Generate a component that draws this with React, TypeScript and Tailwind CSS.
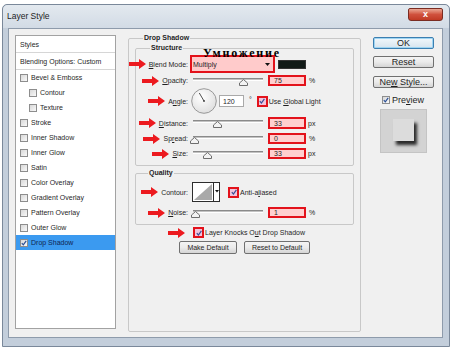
import React from 'react';

// red annotation arrow pointing at a label
function Arrow() {
  return (
    <svg width="17" height="10" viewBox="0 0 17 10" className="shrink-0">
      <polygon points="0,3 10,3 10,0 17,5 10,10 10,7 0,7" fill="#ec1a1f" />
    </svg>
  );
}

function ListBox({ checked }: { checked?: boolean }) {
  return (
    <span className="flex h-[8px] w-[8px] shrink-0 items-center justify-center border border-[#8d8d8d] bg-gradient-to-br from-[#d8d8d8] to-[#f9f9f9]">
      {checked && (
        <svg width="6" height="6" viewBox="0 0 6 6">
          <path d="M0.8 3.2 L2.3 4.8 L5.2 0.9" fill="none" stroke="#2a4f96" strokeWidth="1.2" />
        </svg>
      )}
    </span>
  );
}

function RedCheck() {
  return (
    <span className="flex h-[11px] w-[11px] shrink-0 items-center justify-center border-2 border-[#e3121b] bg-[#f0c4dc]">
      <svg width="6" height="6" viewBox="0 0 6 6">
        <path d="M0.8 3.2 L2.4 5 L5.4 0.8" fill="none" stroke="#3c4f98" strokeWidth="1.2" />
      </svg>
    </span>
  );
}

function RedInput({ value }: { value: string }) {
  return (
    <div className="ml-[5px] flex h-full w-[38px] shrink-0 items-center border-2 border-[#e3121b] bg-[#ffd0d0] pl-[4px]">
      {value}
    </div>
  );
}

function Slider({ pos }: { pos: number }) {
  return (
    <div className="relative ml-[5px] flex h-full w-[70px] shrink-0 flex-col">
      <div className="mt-[3px] h-[3px] border-t border-b border-t-[#8a8a8a] border-b-white bg-[#c2c2c2]" />
      <svg width="9" height="7" viewBox="0 0 9 7" className="absolute top-[4px]" style={{ left: pos - 4 }}>
        <polygon points="4.5,0.5 8.5,4 8.5,6.5 0.5,6.5 0.5,4" fill="#f3f3f3" stroke="#6e6e6e" />
      </svg>
    </div>
  );
}

function Label({ children }: { children: React.ReactNode }) {
  return (
    <div className="flex w-[52px] shrink-0 items-center justify-end gap-[3px]">
      <Arrow />
      <span className="whitespace-nowrap">{children}</span>
    </div>
  );
}

function Btn({ children, className }: { children: React.ReactNode; className: string }) {
  return (
    <div
      className={`flex items-center justify-center rounded-[2px] border border-[#707070] bg-gradient-to-b from-[#f4f4f4] via-[#ebebeb] to-[#d5d5d5] ${className}`}
    >
      {children}
    </div>
  );
}

const styles = [
  { name: 'Bevel & Emboss', sub: false },
  { name: 'Contour', sub: true },
  { name: 'Texture', sub: true },
  { name: 'Stroke', sub: false },
  { name: 'Inner Shadow', sub: false },
  { name: 'Inner Glow', sub: false },
  { name: 'Satin', sub: false },
  { name: 'Color Overlay', sub: false },
  { name: 'Gradient Overlay', sub: false },
  { name: 'Pattern Overlay', sub: false },
  { name: 'Outer Glow', sub: false },
];

export default function App() {
  return (
    <div className="h-[347px] w-[450px] overflow-hidden bg-white pl-[2px] pt-[4px] font-['Liberation_Sans',Arial,sans-serif] text-[7px] leading-none text-[#1f1f1f]">
      <div className="flex h-[343px] w-[448px] flex-col rounded-t-[5px] border border-[#7a889a] bg-[#c3cedb]">
        {/* Title bar */}
        <div className="flex h-[23px] shrink-0 items-start rounded-t-[5px] bg-gradient-to-b from-[#e3e9ef] to-[#d2dbe5]">
          <span className="ml-[4px] mt-[7px] text-[8.5px] text-[#222]">Layer Style</span>
          <div className="ml-auto mr-[6px] mt-[3px] flex h-[13px] w-[35px] items-center justify-center rounded-b-[3px] rounded-t-[2px] border border-[#7a2c22] bg-gradient-to-b from-[#e9a593] via-[#d0513d] to-[#c03a24]">
            <span className="text-[9px] font-bold text-white">x</span>
          </div>
        </div>

        {/* Client area */}
        <div className="ml-[5px] mr-[6px] flex h-[310px] shrink-0 border border-[#8e9bab] bg-[#f0f0f0] pl-[6px]">
          {/* Styles list */}
          <div className="mt-[6px] flex h-[294px] w-[101px] shrink-0 flex-col border border-[#a2a2a2] bg-white">
            <div className="flex h-[17px] shrink-0 items-center border-b border-[#d6d6d6] pl-[4px]">Styles</div>
            <div className="flex h-[17px] shrink-0 items-center border-b border-[#d6d6d6] pl-[4px]">Blending Options: Custom</div>
            {styles.map((s) => (
              <div
                key={s.name}
                className={`flex h-[15px] shrink-0 items-center gap-[3px] ${s.sub ? 'pl-[13px]' : 'pl-[4px]'}`}
              >
                <ListBox />
                <span>{s.name}</span>
              </div>
            ))}
            <div className="flex h-[15px] shrink-0 items-center gap-[3px] bg-[#3b9af0] pl-[4px] text-[#0f2550]">
              <ListBox checked />
              <span>Drop Shadow</span>
            </div>
          </div>

          {/* Drop Shadow panel */}
          <fieldset className="relative ml-[12px] mt-[4px] h-[299px] w-[233px] shrink-0 rounded-[2px] border border-[#c8c8c8]">
            <legend className="ml-[14px] px-[1px] text-[7px] font-bold leading-[10px]">Drop Shadow</legend>

            <span className="absolute left-[74px] top-[4px] z-10 font-['Liberation_Serif',serif] text-[12px] font-bold leading-[12px] tracking-[1.8px] text-black">
              Умножение
            </span>

            {/* Structure */}
            <fieldset className="ml-[6px] h-[123px] w-[219px] rounded-[2px] border border-[#c8c8c8]">
              <legend className="ml-[14px] px-[1px] font-bold leading-[10px]">Structure</legend>

              <div className="mt-[2px] flex h-[18px] items-center">
                <Label>
                  <span className="underline">B</span>lend Mode:
                </Label>
                <div className="ml-[2px] flex h-full w-[85px] shrink-0 items-center border-2 border-[#e3121b] bg-[#ffcbcb] pl-[1px]">
                  <span>Multiply</span>
                  <svg width="5" height="3" viewBox="0 0 5 3" className="ml-auto mr-[3px]">
                    <polygon points="0,0 5,0 2.5,3" fill="#111" />
                  </svg>
                </div>
                <div className="ml-[3px] h-[9px] w-[28px] shrink-0 border border-[#333] bg-[#111a17]" />
              </div>

              <div className="mt-[2px] flex h-[11px] items-center">
                <Label>
                  <span className="underline">O</span>pacity:
                </Label>
                <Slider pos={50} />
                <RedInput value="75" />
                <span className="ml-[3px]">%</span>
              </div>

              <div className="mt-[3px] flex h-[24px] items-center">
                <Label>
                  A<span className="underline">n</span>gle:
                </Label>
                <svg width="26" height="26" viewBox="0 0 26 26" className="ml-[3px] shrink-0">
                  <defs>
                    <radialGradient id="dial" cx="40%" cy="35%" r="70%">
                      <stop offset="0" stopColor="#ffffff" />
                      <stop offset="1" stopColor="#dedede" />
                    </radialGradient>
                  </defs>
                  <circle cx="13" cy="13" r="12.3" fill="url(#dial)" stroke="#8e8e8e" strokeWidth="0.9" />
                  <line x1="13" y1="13" x2="8.3" y2="5" stroke="#3a3a3a" strokeWidth="0.9" />
                  <circle cx="13" cy="13" r="0.9" fill="#3a3a3a" />
                </svg>
                <div className="ml-[2px] flex h-[12px] w-[25px] shrink-0 items-center border border-[#a9a9a9] bg-white pl-[3px]">120</div>
                <span className="ml-[5px] mb-[3px]">°</span>
                <div className="ml-[5px]">
                  <RedCheck />
                </div>
                <span className="ml-[1px] whitespace-nowrap">
                  Use <span className="underline">G</span>lobal Light
                </span>
              </div>

              <div className="mt-[4px] flex h-[12px] items-center">
                <Label>
                  <span className="underline">D</span>istance:
                </Label>
                <Slider pos={24} />
                <RedInput value="33" />
                <span className="ml-[2px]">px</span>
              </div>

              <div className="mt-[4px] flex h-[11px] items-center">
                <Label>
                  Sp<span className="underline">r</span>ead:
                </Label>
                <Slider pos={1} />
                <RedInput value="0" />
                <span className="ml-[3px]">%</span>
              </div>

              <div className="mt-[4px] flex h-[11px] items-center">
                <Label>
                  <span className="underline">S</span>ize:
                </Label>
                <Slider pos={14} />
                <RedInput value="33" />
                <span className="ml-[2px]">px</span>
              </div>
            </fieldset>

            {/* Quality */}
            <fieldset className="ml-[6px] mt-[2px] h-[57px] w-[219px] rounded-[2px] border border-[#c8c8c8]">
              <legend className="ml-[12px] px-[1px] font-bold leading-[10px]">Quality</legend>

              <div className="mt-[4px] flex h-[20px] items-center">
                <Label>Contour:</Label>
                <svg width="28" height="20" viewBox="0 0 28 20" className="ml-[4px] shrink-0">
                  <rect x="0.5" y="0.5" width="27" height="19" fill="#fff" stroke="#2d2d2d" />
                  <polygon points="2,18 20,2 20,18" fill="#a9a9a9" />
                  <line x1="21.5" y1="0.5" x2="21.5" y2="19.5" stroke="#2d2d2d" />
                  <polygon points="23,8 27,8 25,10.5" fill="#111" />
                </svg>
                <div className="ml-[8px]">
                  <RedCheck />
                </div>
                <span className="ml-[1px] whitespace-nowrap">
                  Anti-a<span className="underline">l</span>iased
                </span>
              </div>

              <div className="mt-[5px] flex h-[11px] items-center">
                <Label>
                  <span className="underline">N</span>oise:
                </Label>
                <Slider pos={2} />
                <RedInput value="1" />
                <span className="ml-[3px]">%</span>
              </div>
            </fieldset>

            <div className="mt-[2px] flex h-[11px] items-center">
              <div className="ml-[39px]">
                <Arrow />
              </div>
              <div className="ml-[8px]">
                <RedCheck />
              </div>
              <span className="ml-[1px] whitespace-nowrap">
                Layer Knocks O<span className="underline">u</span>t Drop Shadow
              </span>
            </div>

            <div className="mt-[3px] flex h-[13px]">
              <Btn className="ml-[50px] w-[58px]">Make Default</Btn>
              <Btn className="ml-[7px] w-[66px]">Reset to Default</Btn>
            </div>
          </fieldset>

          {/* Right column */}
          <div className="ml-[12px] mt-[8px] flex w-[61px] shrink-0 flex-col text-[9px]">
            <div className="flex h-[12px] items-center justify-center rounded-[2px] border border-[#3c7fb1] bg-gradient-to-b from-[#f2f8fc] to-[#d7e4ee] shadow-[inset_0_0_0_1px_#9fd5f2]">
              OK
            </div>
            <Btn className="mt-[7px] h-[12px]">Reset</Btn>
            <Btn className="mt-[8px] h-[12px]">
              <span>
                Ne<span className="underline">w</span> Style...
              </span>
            </Btn>
            <div className="mt-[8px] flex h-[8px] items-center gap-[2px] pl-[9px]">
              <ListBox checked />
              <span>
                Pre<span className="underline">v</span>iew
              </span>
            </div>
            <div className="ml-[7px] mt-[5px] flex h-[44px] w-[47px] items-start justify-center border border-[#c4c4c4] bg-[#d3d3d3] pt-[9px]">
              <div className="h-[22px] w-[21px] bg-[#dcdcdc] shadow-[3px_4px_3px_#2b2b2b]" />
            </div>
          </div>
        </div>
      </div>
    </div>
  );
}
